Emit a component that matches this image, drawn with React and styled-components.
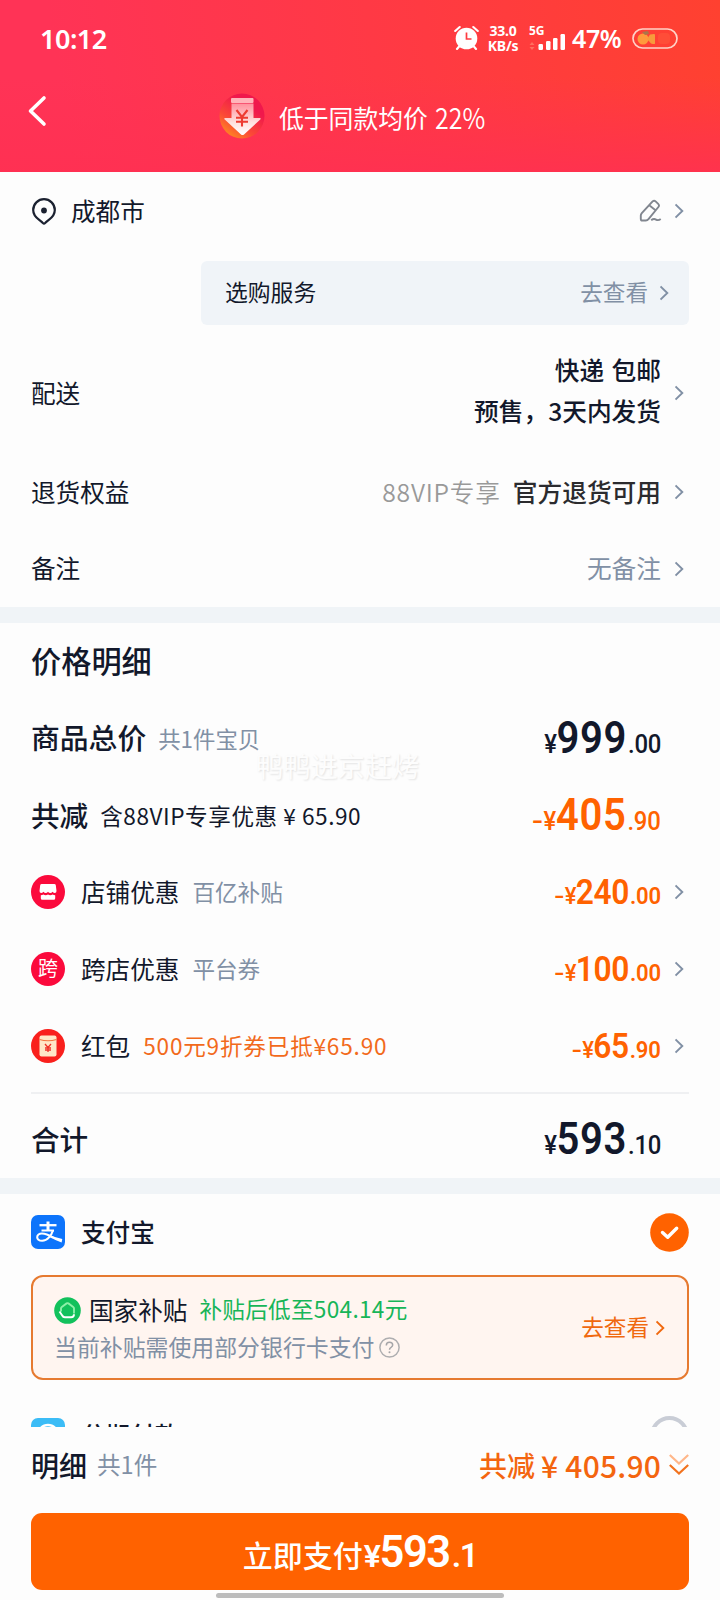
import React from "react";
import styled, { createGlobalStyle } from "styled-components";

const GlobalStyle = createGlobalStyle`
  * {
    box-sizing: border-box;
  }
  body {
    margin: 0;
    background: #fdfdfd;
    font-family: "Noto Sans CJK SC", "Noto Sans", sans-serif;
    color: #12182b;
  }
`;

const Page = styled.div`
  position: relative;
  width: 720px;
  height: 1600px;
  overflow: hidden;
  display: flex;
  flex-direction: column;
  background: #fdfdfd;
  white-space: nowrap;
  line-height: 1;
`;

const Scroll = styled.main`
  height: 1427px;
  overflow: hidden;
  flex: none;
`;

/* ---------- header ---------- */
const Header = styled.header`
  height: 172px;
  color: #fff;
  background: linear-gradient(
      to bottom,
      rgba(255, 48, 82, 0) 45%,
      rgba(255, 48, 82, 0.85) 100%
    ),
    linear-gradient(80deg, #ff3356 10%, #ff3a42 60%, #ff4130 100%);
`;

const StatusBar = styled.div`
  height: 76px;
  padding: 0 42px 0 40px;
  display: flex;
  align-items: center;
  font-family: "Noto Sans", sans-serif;
`;

const Clock = styled.span`
  font-size: 27px;
  font-weight: 600;
  letter-spacing: -0.5px;
  margin-right: auto;
`;

const Speed = styled.div`
  width: 36px;
  margin: 0 7px 0 5px;
  text-align: center;
  font-size: 14px;
  line-height: 15px;
  font-weight: 700;
  letter-spacing: -0.2px;
`;

const Battery = styled.span`
  font-size: 25px;
  font-weight: 600;
  width: 51px;
  margin: 0 9px 0 4px;
  letter-spacing: -0.4px;
`;

const NavBar = styled.div`
  height: 80px;
  display: flex;
  align-items: center;
  padding-left: 27px;
`;

const BackIcon = styled.svg`
  margin-bottom: 10px;
`;

const Slogan = styled.div`
  display: flex;
  align-items: center;
  margin-left: 172px;
  font-size: 24.8px;
  span {
    margin: 2px 0 0 14px;
  }
  b {
    font-weight: 350;
    font-size: 29px;
    display: inline-block;
    margin-left: 7px;
    transform: scaleX(0.86);
    transform-origin: left center;
  }
`;

/* ---------- rows ---------- */
const Row = styled.div`
  display: flex;
  align-items: center;
  height: ${(props) => props.$h || 77}px;
  margin-top: ${(props) => props.$mt || 0}px;
  padding: ${(props) => props.$top || 0}px 31px 0 31px;
`;

const Label = styled.span`
  font-size: ${(props) => props.$size || 24.6}px;
  font-weight: ${(props) => props.$weight || 400};
  margin-left: ${(props) => props.$ml || 0}px;
  margin-bottom: 2px;
`;

const Note = styled(Label)`
  font-size: ${(props) => props.$size || 22.6}px;
  color: ${(props) => props.$color || "#8190a5"};
  margin-left: ${(props) => (props.$ml === undefined ? 13 : props.$ml)}px;
  margin-bottom: ${(props) => (props.$drop ? 0 : 2)}px;
  letter-spacing: ${(props) => props.$ls || 0}px;
`;

const Value = styled.div`
  margin-left: auto;
  margin-right: ${(props) => (props.$arrow ? 14 : 28)}px;
  text-align: right;
  font-size: 24.7px;
  font-weight: ${(props) => props.$weight || 400};
  line-height: ${(props) => props.$lh || 1};
  color: ${(props) => props.$color || "#12182b"};
  margin-bottom: ${(props) => (props.$lh ? 7 : 2)}px;
  word-spacing: 2px;
`;

const VipHint = styled.span`
  color: #999;
  font-weight: 350;
  margin-right: 12px;
  letter-spacing: 0.8px;
`;

const ServiceBox = styled.div`
  margin: 11px 31px 0 201px;
  height: 64px;
  padding: 0 15px 0 24px;
  border-radius: 6px;
  background: #f0f4f8;
  display: flex;
  align-items: center;
`;

const Push = styled.i`
  flex: 1;
`;

const Gap = styled.div`
  height: 16px;
  background: #f0f4f7;
`;

const Line = styled.div`
  height: 2px;
  margin: 8px 31px 0;
  background: #eff0f2;
`;

const AmountBox = styled.div`
  margin-left: auto;
  margin-right: ${(props) => (props.$arrow ? 14 : 28)}px;
  display: flex;
  align-items: baseline;
  font-family: Roboto, sans-serif;
  color: ${(props) => (props.$orange ? "#ff6200" : "#12182b")};
  font-weight: 500;
  transform: scaleX(0.92);
  transform-origin: right center;
`;

const Sign = styled.span`
  font-size: ${(props) => (props.$small ? 24 : 26)}px;
  letter-spacing: ${(props) => (props.$small ? 0.2 : 0.6)}px;
  margin-right: -1px;
`;

const Minus = styled.span`
  display: inline-block;
  transform: scaleX(1.35);
  transform-origin: right center;
`;

const Int = styled.span`
  font-size: ${(props) => (props.$small ? 34.5 : 43.5)}px;
  font-weight: ${(props) => (props.$small ? 600 : 650)};
  letter-spacing: ${(props) => (props.$small ? -0.4 : 0.7)}px;
`;

const Dec = styled.span`
  font-size: ${(props) => (props.$small ? 24 : 26)}px;
  font-weight: ${(props) => (props.$small ? 600 : 500)};
  letter-spacing: -0.2px;
  margin-left: 1px;
`;

const Circle = styled.div`
  width: 34px;
  height: 34px;
  border-radius: 50%;
  background: ${(props) => props.$bg || "#fb0a3c"};
  color: #fff;
  font-size: 20px;
  display: flex;
  align-items: center;
  justify-content: center;
  padding-bottom: ${(props) => props.$pb || 0}px;
`;

/* ---------- payment ---------- */
const SubsidyCard = styled.div`
  margin: 5px 31px 0;
  height: 105px;
  border: 2px solid #e67a30;
  border-radius: 12px;
  background: #fff5f0;
  display: flex;
  align-items: center;
  padding: 0 17px 0 21px;
`;

const CardText = styled.div`
  padding-top: 3px;
`;

const CardLine = styled.div`
  display: flex;
  align-items: center;
  height: 37px;
`;

const Radio = styled.div`
  width: 39px;
  height: 39px;
  border: 4px solid #c9cdd6;
  border-radius: 50%;
`;

const BottomBar = styled.footer`
  flex: 1;
`;

const Saved = styled.div`
  margin-left: auto;
  display: flex;
  align-items: center;
  color: #f4650f;
  font-size: 28px;
  margin-bottom: 2px;
  font-weight: 450;
`;

const Money = styled.span`
  font-size: 30px;
  letter-spacing: 0.2px;
  margin-left: 6px;
  margin-right: 8px;
`;

const PayButton = styled.button`
  display: flex;
  width: 658px;
  height: 77px;
  margin: 8px 31px 0;
  padding: 0;
  border: 0;
  border-radius: 11px;
  background: #ff6200;
  color: #fff;
  font: 450 30px/1 "Noto Sans CJK SC", sans-serif;
  align-items: baseline;
  justify-content: center;
  padding-top: 18px;
`;

const PayNumber = styled.span`
  font-family: Roboto, sans-serif;
  font-weight: 600;
  font-size: ${(props) => props.$size}px;
  letter-spacing: -1.4px;
  margin-left: ${(props) => props.$ml || 0}px;
`;

const HomeBar = styled.div`
  position: absolute;
  left: 216px;
  bottom: 2px;
  width: 288px;
  height: 5px;
  border-radius: 3px;
  background: #bcbcbc;
`;

const Watermark = styled.div`
  position: absolute;
  left: 256px;
  top: 752px;
  font-size: 27.2px;
  color: #fdfdfd;
  text-shadow: 1px 1px 2px rgba(0, 0, 0, 0.11);
`;

/* ---------- icons ---------- */
function Arrow({ color = "#8190a5" }) {
  return (
    <svg width="14" height="18" viewBox="0 0 14 18" fill="none">
      <path d="M0.500 2.500l6.800 6.500-6.800 6.500" stroke={color} strokeWidth="1.9" />
    </svg>
  );
}

function AlarmIcon() {
  return (
    <svg width="26" height="26" viewBox="0 0 26 26" fill="none">
      <circle cx="12.500" cy="13.500" r="10.800" fill="#fff" />
      <path
        d="M1.2 6l4.5-4M23.800 6L19.300 2M5.500 21l-2.500 3M19.500 21l2.500 3"
        stroke="#fff"
        strokeWidth="2.100"
        strokeLinecap="round"
      />
      <path d="M12.500 7.500v6.500h5" stroke="#ff3b40" strokeWidth="1.700" />
    </svg>
  );
}

function SignalIcon() {
  return (
    <svg width="40" height="26" viewBox="0 0 40 26">
      <text
        x="1"
        y="10"
        fontSize="12"
        fontWeight="700"
        fill="#fff"
        fontFamily="Noto Sans"
      >
        5G
      </text>
      <path d="M4 17l-2.500 3h5zM4 25l-2.500-3h5z" fill="#ff7060" />
      <g fill="#fff">
        <rect x="10.500" y="19" width="4.500" height="6" rx="1.200" />
        <rect x="18" y="16" width="4.500" height="9" rx="1.200" />
        <rect x="25" y="13" width="4.500" height="12" rx="1.200" />
        <rect x="32.500" y="9" width="4.500" height="16" rx="1.200" />
      </g>
    </svg>
  );
}

function BatteryIcon() {
  return (
    <svg width="46" height="21" viewBox="0 0 46 21" fill="none">
      <rect
        x="1"
        y="1"
        width="44"
        height="19"
        rx="9.500"
        stroke="#ffd3c8"
        strokeWidth="1.700"
      />
      <circle cx="11" cy="11" r="5.500" fill="#ff9a3c" />
      <path d="M15 11l3-4.500q5-1 5 0v9q0 1-4 0z" fill="#f79a3c" />
      <path d="M10 4l6-1 1 3-4 1z" fill="#a9774a" />
      <rect x="26" y="5" width="12" height="11" rx="4" fill="#ff4d38" />
    </svg>
  );
}

function DropIcon() {
  return (
    <svg width="46" height="46" viewBox="0 0 46 46" fill="none">
      <defs>
        <linearGradient id="drop" x1="0.900" y1="0" x2="0.200" y2="1">
          <stop offset="0.300" stopColor="#f0184c" />
          <stop offset="0.700" stopColor="#fb4a36" />
          <stop offset="1" stopColor="#ff9020" />
        </linearGradient>
        <linearGradient id="arrowFill" x1="0" y1="0" x2="0" y2="1">
          <stop offset="0" stopColor="#ff8f9c" />
          <stop offset="0.600" stopColor="#ffe1de" />
          <stop offset="1" stopColor="#fff" />
        </linearGradient>
      </defs>
      <circle cx="23" cy="23" r="22.500" fill="url(#drop)" />
      <path
        d="M12.500 10.500v14.500H6q-1.500.5 0 1.700L22 41.500q1.500 1 3 0l16-14.800q1.300-1.200 0-1.700h-6.500V10.500z"
        fill="url(#arrowFill)"
      />
      <rect x="12" y="5" width="22.500" height="5" rx="1" fill="#ffb4ba" />
      <path
        d="M17.500 17l5.500 7 5.500-7M23 24v9.500M17 24.800h12M17 28.800h12"
        stroke="#ed3c32"
        strokeWidth="2.100"
      />
    </svg>
  );
}

function PinIcon() {
  return (
    <svg width="26" height="29" viewBox="0 0 26 29" fill="none">
      <path
        d="M13 2.200A10.800 10.800 0 0 1 23.800 13c0 4.700-3 7.600-5.700 9.600-1.700 1.300-3 2.300-4 3.400-.700.700-1.500.700-2.200 0-1-1.100-2.300-2.100-4-3.400C5.200 20.600 2.200 17.700 2.200 13A10.800 10.800 0 0 1 13 2.200z"
        stroke="#1b2130"
        strokeWidth="2.200"
      />
      <circle cx="13" cy="13.500" r="2.900" fill="#1b2130" />
    </svg>
  );
}

function PenIcon() {
  return (
    <svg width="24" height="24" viewBox="0 0 24 24" fill="none">
      <path
        d="M13.600 2.400q1.500-1.400 3 0l2.600 2.500q1.500 1.500.2 3.100L9.500 20.100q-1.100 1.400-2.700 1.400H3.400q-1.600 0-1.600-1.600v-3.300q0-1.400 1-2.500zM10.300 6.200l6.500 5.200"
        stroke="#81868f"
        strokeWidth="1.900"
        strokeLinejoin="round"
      />
      <path
        d="M12.200 21.300q2.500-2 4.800-.7t4.700-.6"
        stroke="#81868f"
        strokeWidth="1.900"
      />
    </svg>
  );
}

function ShopIcon() {
  return (
    <svg width="20" height="18" viewBox="0 0 20 18">
      <path
        d="M3.800 1h12.400q1.500 0 1.600 1.300l.7 5.700q0 1.900-1.700 1.900-1.200 0-2.200-1.200-1 1.200-2.300 1.200T10 8.700Q9 9.900 7.700 9.900T5.400 8.700Q4.400 9.900 3.200 9.900 1.500 9.900 1.500 8l.7-5.700Q2.300 1 3.800 1z"
        fill="#fff"
      />
      <path
        d="M2.800 12.300q1.400 0 2.600-.8 1 .8 2.300.8t2.300-.8q1 .8 2.300.8t2.300-.8q1.200.8 2.600.8v3q0 1.500-1.400 1.500H4.200q-1.400 0-1.400-1.500z"
        fill="#fff"
      />
    </svg>
  );
}

function PacketIcon() {
  return (
    <svg width="18" height="22" viewBox="0 0 18 22" fill="none">
      <rect x="0.500" y="0.500" width="17" height="21" rx="2" fill="#ffe7c8" />
      <path d="M.5 4.500Q9 7 17.500 4.500" stroke="#f3753f" strokeWidth="1.200" />
      <path
        d="M6 9l3 3.500L12 9M9 12.500V17M6 13h6M6 15h6"
        stroke="#f0322a"
        strokeWidth="1.300"
      />
    </svg>
  );
}

function AlipayIcon() {
  return (
    <svg width="34" height="34" viewBox="0 0 34 34" fill="none">
      <rect width="34" height="34" rx="7" fill="#0d74fb" />
      <path d="M8.500 10.200h17" stroke="#fff" strokeWidth="2.300" />
      <path d="M17 6.500v9" stroke="#fff" strokeWidth="3" />
      <path d="M10.500 15.500h12.500" stroke="#fff" strokeWidth="2" />
      <path
        d="M22 15.200c-1.500 5-5.500 10.600-10.800 10.600-3.400 0-5-1.700-5-3.600 0-2.100 2-3.700 4.700-3.700 4 0 7.600 1.900 11 4"
        stroke="#fff"
        strokeWidth="2.100"
      />
      <path d="M18.500 19.800q6.500 3.200 12.800 4.200l-.7 3.500q-6-2-12.800-6z" fill="#fff" />
    </svg>
  );
}

function CheckIcon() {
  return (
    <svg width="39" height="39" viewBox="0 0 39 39" fill="none">
      <circle cx="19.500" cy="19.500" r="19.300" fill="#ff6200" />
      <path
        d="M12.500 19.500l5.200 4.800 9-9"
        stroke="#fff"
        strokeWidth="3.400"
        strokeLinecap="round"
        strokeLinejoin="round"
      />
    </svg>
  );
}

function HouseIcon() {
  return (
    <svg width="27" height="27" viewBox="0 0 27 27" fill="none">
      <circle cx="13.500" cy="13.500" r="13.300" fill="#12c15c" />
      <path
        d="M7 14.500v-3q0-1 .8-1.600l4.800-3.500q.9-.6 1.800 0l4.800 3.500q.8.600.8 1.600v5"
        stroke="#8df0a8"
        strokeWidth="1.900"
      />
      <path
        d="M5.500 14.500l2.700 4q.8 1.700 2.600 1.700h6.300q2.900 0 2.900-3"
        stroke="#fff"
        strokeWidth="1.900"
      />
    </svg>
  );
}

function HelpIcon() {
  return (
    <svg width="21" height="21" viewBox="0 0 21 21" fill="none">
      <circle cx="10.500" cy="10.500" r="9.600" stroke="#aeaeb0" strokeWidth="1.500" />
      <path
        d="M7.300 8.500q0-3.200 3.200-3.200t3.200 2.800q0 1.300-1.600 2.200t-1.600 2.500"
        stroke="#a5a5a8"
        strokeWidth="1.500"
      />
      <circle cx="10.500" cy="15.300" r="1" fill="#a5a5a8" />
    </svg>
  );
}

function InstallmentIcon() {
  return (
    <svg width="34" height="34" viewBox="0 0 34 34" fill="none">
      <rect width="34" height="34" rx="7" fill="#3bbcf6" />
      <circle cx="17" cy="17" r="10" stroke="#fff" strokeWidth="2.400" />
    </svg>
  );
}

function DoubleDown() {
  return (
    <svg width="20" height="24" viewBox="0 0 20 24" fill="none">
      <path d="M.8 2l9.200 8.500L19.200 2" stroke="#ffb78a" strokeWidth="2.200" />
      <path d="M.8 12L10 20.500l9.200-8.500" stroke="#f2731f" strokeWidth="2.200" />
    </svg>
  );
}

function Amount({ minus, int, dec, small, arrow }) {
  return (
    <AmountBox $orange={minus} $arrow={arrow}>
      <Sign $small={small}>
        {minus ? <Minus>-</Minus> : null}¥
      </Sign>
      <Int $small={small}>{int}</Int>
      <Dec $small={small}>{dec}</Dec>
    </AmountBox>
  );
}

const discounts = [
  {
    icon: (
      <Circle>
        <ShopIcon />
      </Circle>
    ),
    name: "店铺优惠",
    note: "百亿补贴",
    int: "240",
    dec: ".00",
  },
  {
    icon: <Circle $pb={2}>跨</Circle>,
    name: "跨店优惠",
    note: "平台券",
    int: "100",
    dec: ".00",
  },
  {
    icon: (
      <Circle $bg="#f9201d">
        <PacketIcon />
      </Circle>
    ),
    name: "红包",
    note: "500元9折券已抵¥65.90",
    color: "#f26a1b",
    ls: 0.8,
    int: "65",
    dec: ".90",
  },
];

function TopHeader() {
  return (
    <Header>
      <StatusBar>
        <Clock>10:12</Clock>
        <AlarmIcon />
        <Speed>
          33.0
          <br />
          KB/s
        </Speed>
        <SignalIcon />
        <Battery>47%</Battery>
        <BatteryIcon />
      </StatusBar>
      <NavBar>
        <BackIcon width="20" height="32" viewBox="0 0 20 32" fill="none">
          <path
            d="M17 3L3.500 16 17 29"
            stroke="#fff"
            strokeWidth="3.600"
            strokeLinecap="round"
            strokeLinejoin="round"
          />
        </BackIcon>
        <Slogan>
          <DropIcon />
          <span>低于同款均价</span>
          <b>22%</b>
        </Slogan>
      </NavBar>
    </Header>
  );
}

function OrderInfo() {
  return (
    <>
      <Row $h={78}>
        <PinIcon />
        <Label $ml={14}>成都市</Label>
        <Push />
        <PenIcon />
        <Label $ml={12} />
        <Arrow />
      </Row>
      <ServiceBox>
        <Label $size={22.8}>选购服务</Label>
        <Push />
        <Note $ml={0}>去查看</Note>
        <Label $ml={12} />
        <Arrow />
      </ServiceBox>
      <Row $h={136}>
        <Label>配送</Label>
        <Value $arrow $weight={500} $lh="41px">
          快递 包邮
          <br />
          预售，3天内发货
        </Value>
        <Arrow />
      </Row>
      <Row $h={62}>
        <Label>退货权益</Label>
        <Value $arrow $weight={500} $color="#2b2b2e">
          <VipHint>88VIP专享</VipHint>
          官方退货可用
        </Value>
        <Arrow />
      </Row>
      <Row $h={84} $top={7}>
        <Label>备注</Label>
        <Value $arrow $color="#8190a5">
          无备注
        </Value>
        <Arrow />
      </Row>
    </>
  );
}

function PriceDetail() {
  return (
    <>
      <Row $h={76}>
        <Label $size={30.2} $weight={500}>
          价格明细
        </Label>
      </Row>
      <Row $top={2}>
        <Label $size={28.8} $weight={500}>
          商品总价
        </Label>
        <Note $ml={12} $size={22.4} $drop>
          共1件宝贝
        </Note>
        <Amount int="999" dec=".00" />
      </Row>
      <Row $top={3}>
        <Label $size={28.6} $weight={500}>
          共减
        </Label>
        <Note $drop $ml={12} $ls={0.55} $color="#12182b">
          含88VIP专享优惠 ¥ 65.90
        </Note>
        <Amount minus int="405" dec=".90" />
      </Row>
      {discounts.map((el) => (
        <Row key={el.name} $top={1}>
          {el.icon}
          <Label $ml={16}>{el.name}</Label>
          <Note $drop $color={el.color} $ls={el.ls}>
            {el.note}
          </Note>
          <Amount minus int={el.int} dec={el.dec} small arrow />
          <Arrow />
        </Row>
      ))}
      <Line />
      <Row $h={84} $top={8}>
        <Label $size={28.6} $weight={500}>
          合计
        </Label>
        <Amount int="593" dec=".10" />
      </Row>
    </>
  );
}

function Payment() {
  return (
    <>
      <Row $h={76}>
        <AlipayIcon />
        <Label $ml={16} $weight={450}>
          支付宝
        </Label>
        <Push />
        <CheckIcon />
      </Row>
      <SubsidyCard>
        <CardText>
          <CardLine>
            <HouseIcon />
            <Label $ml={8}>国家补贴</Label>
            <Note $ml={12} $ls={0.3} $color="#17b558">
              补贴后低至504.14元
            </Note>
          </CardLine>
          <CardLine>
            <Note $ml={0} $size={22.9}>
              当前补贴需使用部分银行卡支付
            </Note>
            <Label $ml={5} />
            <HelpIcon />
          </CardLine>
        </CardText>
        <Push />
        <Note $ml={0} $drop $color="#f0690f">
          去查看
        </Note>
        <Label $ml={7} />
        <Arrow color="#f0690f" />
      </SubsidyCard>
      <Row $h={76} $mt={17}>
        <InstallmentIcon />
        <Label $ml={16} $weight={500}>
          分期付款
        </Label>
        <Push />
        <Radio />
      </Row>
    </>
  );
}

export default function App() {
  return (
    <Page>
      <GlobalStyle />
      <Watermark>鸭鸭进京赶烤</Watermark>
      <Scroll>
        <TopHeader />
        <OrderInfo />
        <Gap />
        <PriceDetail />
        <Gap />
        <Payment />
      </Scroll>
      <BottomBar>
        <Row $h={78}>
          <Label $size={28} $weight={500}>
            明细
          </Label>
          <Note $ml={10} $size={23.6}>
            共1件
          </Note>
          <Saved>
            共减
            <Money>¥ 405.90</Money>
            <DoubleDown />
          </Saved>
        </Row>
        <PayButton>
          立即支付
          <PayNumber $size={32} $ml={1}>
            ¥
          </PayNumber>
          <PayNumber $size={43.5}>593</PayNumber>
          <PayNumber $size={33} $ml={2}>
            .1
          </PayNumber>
        </PayButton>
      </BottomBar>
      <HomeBar />
    </Page>
  );
}
